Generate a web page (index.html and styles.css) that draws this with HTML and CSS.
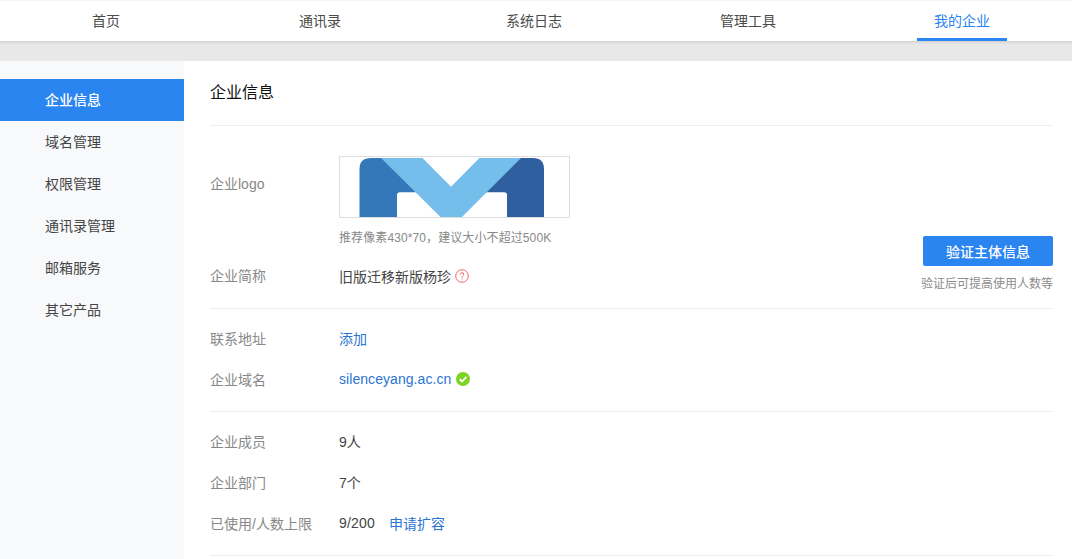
FILE: index.html
```html
<!DOCTYPE html>
<html lang="zh-CN">
<head>
<meta charset="utf-8">
<title>企业信息</title>
<link rel="stylesheet" href="styles.css">
</head>
<body>
<nav class="topnav">
  <a class="tab">首页</a>
  <a class="tab">通讯录</a>
  <a class="tab">系统日志</a>
  <a class="tab">管理工具</a>
  <a class="tab active">我的企业</a>
</nav>
<div class="layout">
  <aside class="sidebar">
    <a class="side-item active">企业信息</a>
    <a class="side-item">域名管理</a>
    <a class="side-item">权限管理</a>
    <a class="side-item">通讯录管理</a>
    <a class="side-item">邮箱服务</a>
    <a class="side-item">其它产品</a>
  </aside>
  <main class="content">
    <h1 class="title">企业信息</h1>
    <section class="section section-brand">
      <div class="row row-logo">
        <span class="label">企业logo</span>
        <div class="logo-col">
          <div class="logo-box">
            <svg class="logo" width="229" height="60" viewBox="0 0 229 60">
              <path d="M19.500 60V12Q19.500 1 31 1H60L78 36V60Z" fill="#3478b9"/>
              <path d="M204 60V12Q204 1 193 1H163L145 36V60Z" fill="#2f5f9f"/>
              <path d="M57 60V38Q57 35.300 60 35.300H164Q167 35.300 167 38V60Z" fill="#fff"/>
              <path d="M41 1H82.500L111 29.700L139.500 1H181L122 60H100.500Z" fill="#75bdea"/>
            </svg>
          </div>
          <p class="hint">推荐像素430*70，建议大小不超过500K</p>
        </div>
      </div>
      <div class="row row-name">
        <span class="label">企业简称</span>
        <span class="value">旧版迁移新版杨珍</span>
        <svg class="icon-help" width="14" height="14" viewBox="0 0 14 14">
          <circle cx="7" cy="7" r="6.300" fill="none" stroke="#f0686a" stroke-width="1"/>
          <path d="M5.200 5.500Q5.300 3.700 7 3.700Q8.800 3.700 8.800 5.300Q8.800 6.200 7.800 6.800Q7 7.300 7 8.500" fill="none" stroke="#f0686a" stroke-width="1"/>
          <path d="M7 9.600V10.600" stroke="#f0686a" stroke-width="1"/>
        </svg>
      </div>
      <div class="verify">
        <button class="verify-btn">验证主体信息</button>
        <p class="verify-note">验证后可提高使用人数等</p>
      </div>
    </section>
    <section class="section section-contact">
      <div class="row row-info">
        <span class="label">联系地址</span>
        <a class="link">添加</a>
      </div>
      <div class="row row-info">
        <span class="label">企业域名</span>
        <a class="link link-domain">silenceyang.ac.cn</a>
        <svg class="icon-ok" width="14" height="14" viewBox="0 0 14 14">
          <circle cx="7" cy="7" r="7" fill="#7ed321"/>
          <path d="M3.600 7.200L6 9.500L10.400 4.900" fill="none" stroke="#fff" stroke-width="1.800"/>
        </svg>
      </div>
    </section>
    <section class="section section-stats">
      <div class="row row-info">
        <span class="label">企业成员</span>
        <span class="value">9人</span>
      </div>
      <div class="row row-info">
        <span class="label">企业部门</span>
        <span class="value">7个</span>
      </div>
      <div class="row row-info">
        <span class="label">已使用/人数上限</span>
        <span class="value value-quota">9/200</span>
        <a class="link link-expand">申请扩容</a>
      </div>
    </section>
  </main>
</div>
</body>
</html>
```
FILE: styles.css
```css
* {
  box-sizing: border-box;
}
html, body {
  margin: 0;
  height: 559px;
  overflow: hidden;
}
body {
  background: #e8e8e8;
  font-family: "Liberation Sans", "Noto Sans CJK SC", sans-serif;
  font-size: 14px;
  color: #444;
}
.topnav {
  display: grid;
  grid-template-columns: repeat(5, 214px);
  height: 41px;
  padding-right: 2px;
  background: #fff;
  border-top: 1px solid #f5f5f5;
  box-shadow: 0 1px 3px rgba(0, 0, 0, .14);
  position: relative;
}
.tab {
  justify-self: center;
  width: 90px;
  height: 40px;
  margin-right: 2px;
  line-height: 40px;
  text-align: center;
  color: #4a4a4a;
}
.tab.active {
  color: #2b85f0;
  border-bottom: 3px solid #2b85f0;
}
.layout {
  display: flex;
  margin-top: 20px;
  height: 498px;
  background: #fff;
}
.sidebar {
  flex: 0 0 184px;
  padding-top: 18px;
  background: #f8f9fb;
}
.side-item {
  display: block;
  height: 42px;
  line-height: 42px;
  padding-left: 45px;
  color: #444;
}
.side-item.active {
  background: #2b85f0;
  color: #fff;
  font-weight: 500;
}
.content {
  flex: 1;
  padding: 0 19px 0 26px;
}
.title {
  margin: 0;
  height: 65px;
  line-height: 64px;
  font-size: 16px;
  font-weight: 400;
  color: #111;
  border-bottom: 1px solid #eee;
}
.section {
  border-bottom: 1px solid #eee;
}
.section-brand {
  position: relative;
  height: 183px;
  padding-top: 30px;
}
.section-contact {
  height: 103px;
  padding-top: 8px;
}
.section-stats {
  height: 144px;
  padding-top: 8px;
}
.row {
  display: flex;
  align-items: center;
}
.label {
  flex: 0 0 129px;
  color: #888;
}
.value {
  color: #444;
}
.value-quota {
  width: 36px;
  letter-spacing: .2px;
}
.row-logo {
  align-items: flex-start;
}
.row-logo .label {
  margin-top: 17px;
}
.logo-box {
  width: 231px;
  height: 62px;
  border: 1px solid #ddd;
}
.logo {
  display: block;
}
.hint {
  margin: 12px 0 0;
  font-size: 12px;
  line-height: 16px;
  letter-spacing: .1px;
  color: #888;
}
.row-name {
  margin-top: 17px;
  height: 24px;
}
.row-name .value {
  margin-top: 1px;
}
.icon-help {
  margin: 2px 0 0 4px;
}
.verify {
  position: absolute;
  right: 0;
  top: 110px;
  text-align: center;
}
.verify-btn {
  display: block;
  width: 130px;
  height: 30px;
  margin-left: auto;
  padding: 0;
  border: 0;
  border-radius: 2px;
  background: #2b85f0;
  color: #fff;
  font: 500 14px "Liberation Sans", "Noto Sans CJK SC", sans-serif;
}
.verify-note {
  margin: 10px 0 0;
  font-size: 12px;
  line-height: 16px;
  color: #8c8c8c;
}
.row-info {
  height: 41px;
}
.link {
  color: #2a75d0;
}
.link-domain {
  letter-spacing: .06px;
}
.icon-ok {
  margin-left: 5px;
}
.link-expand {
  margin-left: 14px;
}
```
